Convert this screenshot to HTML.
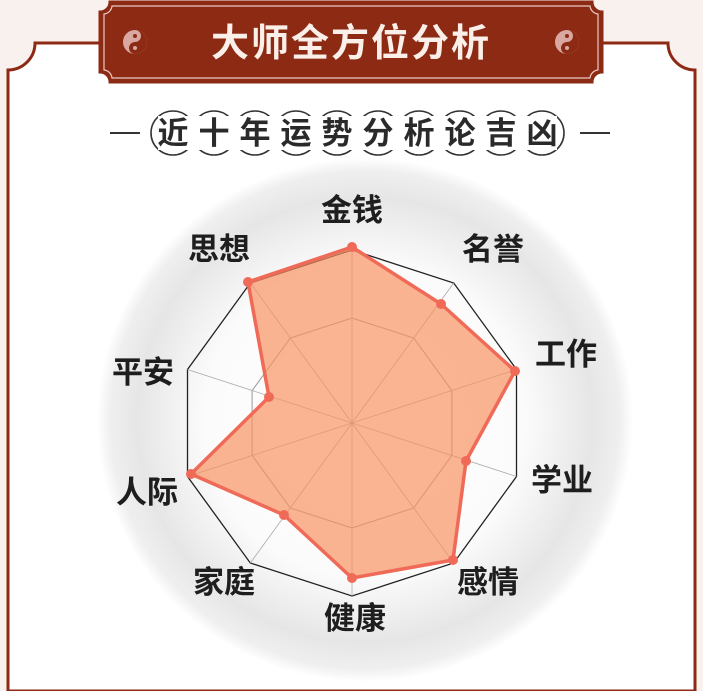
<!DOCTYPE html>
<html><head><meta charset="utf-8"><style>
html,body{margin:0;padding:0;width:703px;height:691px;overflow:hidden;background:#f9f1ee;}
svg{display:block}
text{font-family:"Liberation Sans","Noto Sans CJK SC","WenQuanYi Zen Hei",sans-serif}
</style></head><body>
<svg width="703" height="691" viewBox="0 0 703 691" xmlns="http://www.w3.org/2000/svg">
<defs>
<radialGradient id="ink" cx="0.5" cy="0.5" r="0.5">
<stop offset="0" stop-color="#ffffff"/>
<stop offset="0.6" stop-color="#fbfbfb"/>
<stop offset="0.85" stop-color="#e6e6e6"/>
<stop offset="0.95" stop-color="#efefef"/>
<stop offset="1" stop-color="#ffffff"/>
</radialGradient>
</defs>
<path d="M35 43 H668 A27 27 0 0 0 695 70 V691 H8 V70 A27 27 0 0 0 35 43 Z" fill="#fff" stroke="#8d2a14" stroke-width="3"/>
<ellipse cx="365" cy="420" rx="268" ry="262" fill="url(#ink)"/>
<path d="M110 2 H592 A10 10 0 0 0 602 12 V72 A10 10 0 0 0 592 82 H110 A10 10 0 0 0 100 72 V12 A10 10 0 0 0 110 2 Z" fill="#8d2a14" stroke="#8d2a14" stroke-width="3"/>
<path d="M112 6 H590 A9 9 0 0 0 598 14 V70 A9 9 0 0 0 590 78 H112 A9 9 0 0 0 104 70 V14 A9 9 0 0 0 112 6 Z" fill="none" stroke="#e8c9c0" stroke-width="1.2"/>
<g transform="translate(135,42)"><circle r="12" fill="#d9a8a0"/><path d="M0 -12 A12 12 0 0 1 0 12 A6 6 0 0 1 0 0 A6 6 0 0 0 0 -12Z" fill="#8d2a14"/><circle cy="-6" r="2" fill="#8d2a14"/><circle cy="6" r="2" fill="#d9a8a0"/></g>
<g transform="translate(567,42)"><circle r="12" fill="#d9a8a0"/><path d="M0 -12 A12 12 0 0 1 0 12 A6 6 0 0 1 0 0 A6 6 0 0 0 0 -12Z" fill="#8d2a14"/><circle cy="-6" r="2" fill="#8d2a14"/><circle cy="6" r="2" fill="#d9a8a0"/></g>
<text x="351" y="56" text-anchor="middle" font-size="38" font-weight="bold" fill="#fbefe9" letter-spacing="2">大师全方位分析</text>
<line x1="110" y1="133" x2="140" y2="133" stroke="#333" stroke-width="2"/>
<line x1="580" y1="133" x2="610" y2="133" stroke="#333" stroke-width="2"/>
<g fill="#fff" stroke="#333" stroke-width="1.6">
<circle cx="173" cy="133" r="22"/><circle cx="214" cy="133" r="22"/><circle cx="255" cy="133" r="22"/><circle cx="296" cy="133" r="22"/><circle cx="337" cy="133" r="22"/><circle cx="378" cy="133" r="22"/><circle cx="419" cy="133" r="22"/><circle cx="460" cy="133" r="22"/><circle cx="501" cy="133" r="22"/><circle cx="542" cy="133" r="22"/>
</g>
<rect x="158" y="116" width="399" height="34" fill="#fff"/>
<g font-size="31" font-weight="bold" fill="#2a2a2a" text-anchor="middle">
<text x="173" y="144">近</text><text x="214" y="144">十</text><text x="255" y="144">年</text><text x="296" y="144">运</text><text x="337" y="144">势</text><text x="378" y="144">分</text><text x="419" y="144">析</text><text x="460" y="144">论</text><text x="501" y="144">吉</text><text x="542" y="144">凶</text></g>
<g transform="translate(352,423)">
<polygon points="0,-173 101.7,-140 164.5,-53.5 164.5,53.5 101.7,140 0,173 -101.7,140 -164.5,53.5 -164.5,-53.5 -101.7,-140" fill="none" stroke="#222" stroke-width="1.3"/>
<polygon points="0,-105 61.7,-85 99.9,-32.4 99.9,32.4 61.7,85 0,105 -61.7,85 -99.9,32.4 -99.9,-32.4 -61.7,-85" fill="none" stroke="#999" stroke-width="1"/>
<g stroke="#aaa" stroke-width="0.8">
<line x1="0" y1="0" x2="0" y2="-173"/><line x1="0" y1="0" x2="101.7" y2="-140"/><line x1="0" y1="0" x2="164.5" y2="-53.5"/><line x1="0" y1="0" x2="164.5" y2="53.5"/><line x1="0" y1="0" x2="101.7" y2="140"/><line x1="0" y1="0" x2="0" y2="173"/><line x1="0" y1="0" x2="-101.7" y2="140"/><line x1="0" y1="0" x2="-164.5" y2="53.5"/><line x1="0" y1="0" x2="-164.5" y2="-53.5"/><line x1="0" y1="0" x2="-101.7" y2="-140"/>
</g>
</g>
<polygon points="352,247 441,304 515,371 466,461 453,560 352,578 284,515 191,474 269,397 248,282" fill="#f7905f" fill-opacity="0.68" stroke="#f06a58" stroke-width="3.5" stroke-linejoin="round"/>
<g fill="#f06a58">
<circle cx="352" cy="247" r="5"/><circle cx="441" cy="304" r="5"/><circle cx="515" cy="371" r="5"/><circle cx="466" cy="461" r="5"/><circle cx="453" cy="560" r="5"/><circle cx="352" cy="578" r="5"/><circle cx="284" cy="515" r="5"/><circle cx="191" cy="474" r="5"/><circle cx="269" cy="397" r="5"/><circle cx="248" cy="282" r="5"/></g>
<g font-size="31" font-weight="bold" fill="#1e1e1e" text-anchor="middle">
<text x="352" y="221">金钱</text>
<text x="493" y="260">名誉</text>
<text x="566" y="365">工作</text>
<text x="562" y="491">学业</text>
<text x="488" y="593">感情</text>
<text x="355" y="629">健康</text>
<text x="224" y="593">家庭</text>
<text x="147" y="503">人际</text>
<text x="143" y="383">平安</text>
<text x="219" y="260">思想</text>
</g>
</svg>
</body></html>
